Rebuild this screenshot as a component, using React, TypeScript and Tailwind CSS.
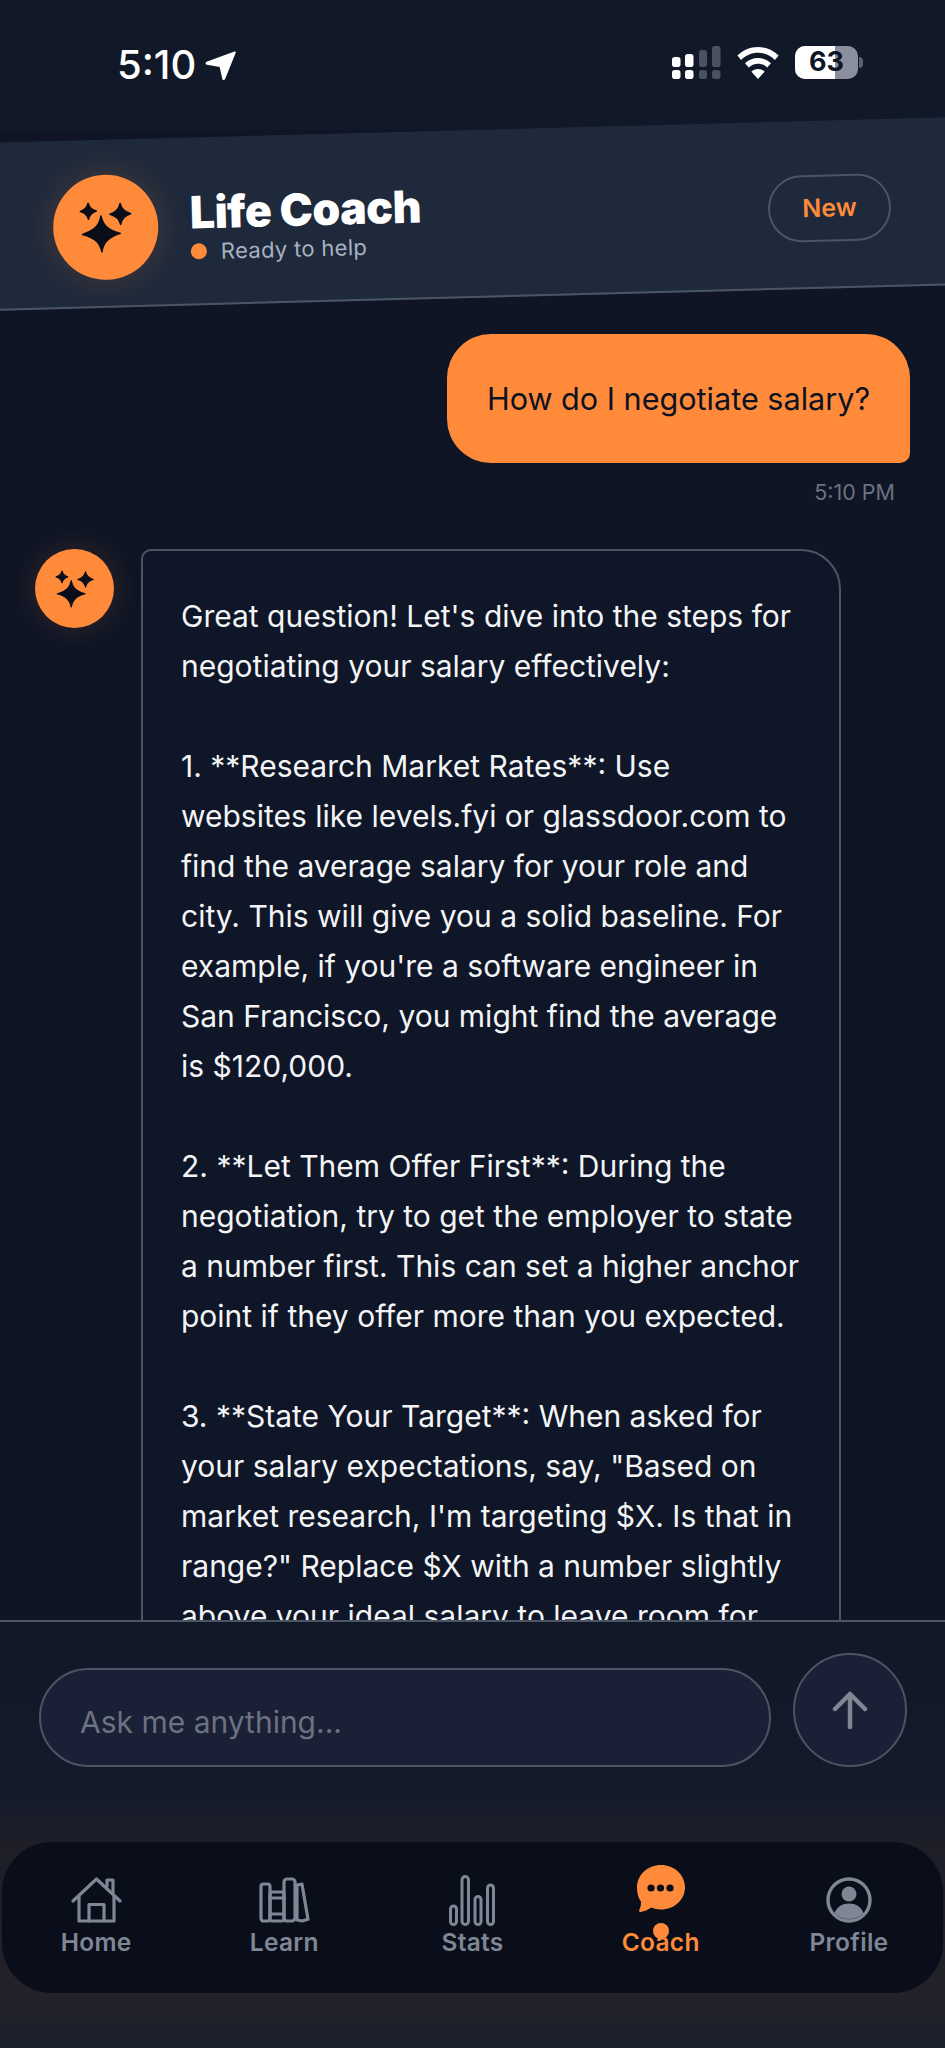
const FONT = "font-['Inter','Noto_Sans',sans-serif]";

function Sparkles({ className }: { className?: string }) {
  return (
    <svg viewBox="0 0 53 51" className={className} fill="currentColor" stroke="currentColor" strokeWidth="1.500" strokeLinejoin="round">
      <path d="M22 14c1.500 8 5 14 19 18-14 4-17.500 10-19 18-1.500-8-5-14-19-18 14-4 17.500-10 19-18z" />
      <path d="M9.500 1c1 4 2.500 6.500 8 8-5.500 1.500-7 4-8 8-1-4-2.500-6.500-8-8 5.500-1.500 7-4 8-8z" />
      <path d="M41.500 2c1 5 3.500 8.500 10.500 10.500-7 2-9.500 5.500-10.500 10.500-1-5-3.500-8.500-10.500-10.500C38 10.500 40.500 7 41.500 2z" />
    </svg>
  );
}

function HomeIcon() {
  return (
    <svg viewBox="0 0 51 46" className="w-[51px] h-[46px]" fill="none" stroke="currentColor" strokeWidth="3.200" strokeLinecap="round" strokeLinejoin="round">
      <path d="M2 24 25.500 2 49 24" />
      <path d="M8 19v25h35V19" />
      <path d="M18 44V27.500h15V44" />
      <path d="M36 9V3h6v13" />
    </svg>
  );
}

function BooksIcon() {
  return (
    <svg viewBox="0 0 51 46" className="w-[51px] h-[46px]" fill="none" stroke="currentColor" strokeWidth="3.200" strokeLinecap="round" strokeLinejoin="round">
      <rect x="2" y="7" width="9" height="37" rx="2.500" />
      <rect x="11" y="15" width="14" height="29" rx="2" />
      <path d="M11 21h14M11 37h14" />
      <rect x="25" y="2" width="11" height="42" rx="3" />
      <path d="m38 8 5-.8 6 35-6 1.800-5-1z" />
    </svg>
  );
}

function StatsIcon() {
  return (
    <svg viewBox="0 0 46 51" className="w-[46px] h-[51px]" fill="none" stroke="currentColor" strokeWidth="3">
      <rect x="1.500" y="31" width="6" height="18.500" rx="3" />
      <rect x="13" y="1.500" width="6.500" height="48" rx="3.200" />
      <rect x="26" y="21.500" width="6" height="28" rx="3" />
      <rect x="38.500" y="10" width="6" height="39.500" rx="3" />
    </svg>
  );
}

function CoachIcon() {
  return (
    <svg viewBox="0 0 49 47" className="w-[49px] h-[47px]">
      <path fill="#ff8a3a" d="M25 0c13.300 0 24 9.900 24 22.300S38.300 44.600 25 44.600c-3.500 0-6.900-.7-9.900-2-2.800 2.300-6.800 4-10.300 4.400-1.300.1-2-1-1.500-2 1.200-2.500 1.800-5.300 1.700-8.300C1.800 32.500 1 27.500 1 22.300 1 9.900 11.700 0 25 0z" />
      <circle cx="15" cy="23" r="3.600" fill="#0a0e1a" />
      <circle cx="24.500" cy="23" r="3.600" fill="#0a0e1a" />
      <circle cx="34" cy="23" r="3.600" fill="#0a0e1a" />
    </svg>
  );
}

function ProfileIcon() {
  return (
    <svg viewBox="0 0 46 46" className="w-[46px] h-[46px]">
      <circle cx="23" cy="23" r="21" fill="none" stroke="currentColor" strokeWidth="3.400" />
      <circle cx="23" cy="17" r="7.500" fill="currentColor" />
      <path d="M8.500 36c2.500-6.500 8-9.500 14.500-9.500s12 3 14.500 9.500c-3.800 4-8.800 6-14.500 6s-10.700-2-14.500-6z" fill="currentColor" />
    </svg>
  );
}

function StatusIcons() {
  return (
    <div className="flex items-center gap-[16px]">
      <svg viewBox="0 0 49 33" className="w-[49px] h-[33px]">
        <rect x="0" y="11" width="8.500" height="10" rx="2.800" fill="#fff" />
        <rect x="0" y="24" width="8.500" height="9" rx="2.800" fill="#fff" />
        <rect x="13" y="8" width="8.500" height="13" rx="2.800" fill="#fff" />
        <rect x="13" y="24" width="8.500" height="9" rx="2.800" fill="#fff" />
        <rect x="27" y="4" width="8" height="17" rx="2.800" fill="#4b5160" />
        <rect x="27" y="24" width="8" height="9" rx="2.800" fill="#4b5160" />
        <rect x="40" y="0" width="8.500" height="21" rx="2.800" fill="#4b5160" />
        <rect x="40" y="24" width="8.500" height="9" rx="2.800" fill="#4b5160" />
      </svg>
      <svg viewBox="0 0 42 32" className="w-[42px] h-[32px]" fill="#fff">
        <path d="M21 0c8 0 15.200 3.300 20.600 8.600l-3.700 4.300C33.500 8.400 27.500 5.700 21 5.700S8.500 8.400 4.100 12.900L.4 8.600C5.800 3.300 13 0 21 0z" />
        <path d="M21 11c5 0 9.600 2 13 5.300l-3.800 4.300c-2.400-2.400-5.600-3.900-9.200-3.900s-6.800 1.500-9.200 3.900L8 16.300C11.400 13 16 11 21 11z" />
        <path d="M21 22c2.600 0 4.900 1 6.600 2.700L21 32l-6.600-7.300C16.100 23 18.400 22 21 22z" />
      </svg>
      <div className="flex items-center gap-[1px]">
        <div className="relative w-[63px] h-[33px] rounded-[10px] overflow-hidden bg-[#8b8e9b]">
          <div className="h-full w-[40px] bg-white" />
          <span className="absolute inset-0 flex items-center justify-center text-[27px] font-bold text-[#0f1525]">63</span>
        </div>
        <div className="w-[4px] h-[11px] rounded-r-full bg-[#5d6270]" />
      </div>
    </div>
  );
}

const paragraphs = [
  "Great question! Let's dive into the steps for negotiating your salary effectively:",
  "1. **Research Market Rates**: Use websites like levels.fyi or glassdoor.com to find the average salary for your role and city. This will give you a solid baseline. For example, if you're a software engineer in San Francisco, you might find the average is $120,000.",
  "2. **Let Them Offer First**: During the negotiation, try to get the employer to state a number first. This can set a higher anchor point if they offer more than you expected.",
  '3. **State Your Target**: When asked for your salary expectations, say, "Based on market research, I\'m targeting $X. Is that in range?" Replace $X with a number slightly above your ideal salary to leave room for',
];

const navItems = [
  { label: "Home", icon: <HomeIcon />, slot: "pb-[4px]" },
  { label: "Learn", icon: <BooksIcon />, slot: "pb-[4px]" },
  { label: "Stats", icon: <StatsIcon />, slot: "pb-[1px]" },
  { label: "Coach", icon: <CoachIcon />, slot: "pb-[15px]", active: true },
  { label: "Profile", icon: <ProfileIcon />, slot: "pb-[4px]" },
];

export default function App() {
  return (
    <div className={`${FONT} w-[945px] h-[2048px] overflow-hidden flex flex-col bg-[#0f1525] text-white`}>
      {/* status bar */}
      <div className="h-[130px] shrink-0 bg-[#111827] flex items-start justify-between pt-[46px] pl-[117px] pr-[82px]">
        <div className="flex items-center gap-[9px]">
          <span className="text-[40px] leading-[38px] font-medium">5:10</span>
          <svg viewBox="0 0 30 30" className="w-[31px] h-[31px]" fill="#fff">
            <path d="M28.500 1.500c.8-.4 1.500.3 1.200 1.100L19.500 28c-.6 1.400-2.500 1.300-2.800-.2l-2.500-11.300L1.800 14.200c-1.500-.3-1.700-2.200-.3-2.900z" />
          </svg>
        </div>
        <StatusIcons />
      </div>

      {/* header */}
      <div className="relative z-10 shrink-0 h-[168px] -mx-[20px] -rotate-[1.53deg] flex items-center justify-between pt-[9px] pl-[73px] pr-[74px] bg-[#1e293b] border-b-2 border-[#4b5563]">
        <div className="flex items-center gap-[32px]">
          <div className="w-[105px] h-[105px] rounded-full bg-[#ff8a3a] shadow-[0_0_36px_rgba(255,138,58,0.18)] text-[#0a0e1a] flex items-center justify-center">
            <Sparkles className="w-[53px] h-[51px]" />
          </div>
          <div className="flex flex-col mt-[6px]">
            <span className="text-[44.500px] leading-[42px] font-black tracking-[-0.5px]">Life Coach</span>
            <div className="flex items-center gap-[14px] mt-[4px]">
              <span className="w-[16px] h-[16px] rounded-full bg-[#ff8a3a]" />
              <span className="text-[22px] leading-[28px] tracking-[0.3px] text-[#a8b2c1]">Ready to help</span>
            </div>
          </div>
        </div>
        <div className="w-[123px] h-[67px] rounded-full border-2 border-[#4b5563] flex items-center justify-center text-[25px] font-semibold text-[#ff8a3a]">
          New
        </div>
      </div>

      {/* messages */}
      <div className="flex-1 min-h-0 overflow-hidden pt-[36px] px-[35px]">
        <div className="flex flex-col items-end">
          <div className="w-[463px] h-[129px] rounded-[44px] rounded-br-[10px] bg-[#ff8a3a] text-[#0d1220] text-[30.600px] flex items-center justify-center">
            How do I negotiate salary?
          </div>
          <span className="mt-[17px] mr-[15px] text-[21.500px] leading-[24px] text-[#6b7280]">5:10 PM</span>
        </div>
        <div className="flex gap-[27px] mt-[45px] items-start">
          <div className="w-[79px] h-[79px] shrink-0 rounded-full bg-[#ff8a3a] shadow-[0_0_30px_rgba(255,138,58,0.15)] text-[#0a0e1a] flex items-center justify-center">
            <Sparkles className="w-[39px] h-[38px]" />
          </div>
          <div className="w-[700px] shrink-0 rounded-[40px] rounded-tl-[10px] border-2 border-[#4b5563] bg-[#0f1627] pt-[40px] pb-[100px] pl-[38px] pr-[39px] text-[30px] leading-[50px] text-[#f3f4f6] flex flex-col gap-[50px]">
            {paragraphs.map((p) => (
              <p key={p}>{p}</p>
            ))}
          </div>
        </div>
      </div>

      {/* input */}
      <div className="relative z-10 shrink-0 h-[172px] border-t-2 border-[#4b5563] bg-gradient-to-b from-[#111827] to-[#141a2a] flex items-start gap-[22px] pl-[39px] pt-[31px]">
        <div className="w-[732px] h-[99px] mt-[15px] rounded-full border-2 border-[#4b5563] bg-[#1a2035] flex items-center pl-[39px] pt-[9px] text-[30px] text-[#6b7280]">
          Ask me anything...
        </div>
        <div className="w-[114px] h-[114px] rounded-full border-2 border-[#4b5563] bg-[#1a2035] flex items-center justify-center text-[#7f8694]">
          <svg viewBox="0 0 36 38" className="w-[36px] h-[38px]" fill="none" stroke="currentColor" strokeWidth="4.500" strokeLinecap="round" strokeLinejoin="round">
            <path d="M18 36V3M3 18 18 3l15 15" />
          </svg>
        </div>
      </div>

      {/* nav */}
      <div className="shrink-0 h-[256px] bg-[linear-gradient(180deg,#141a2a_0%,#1e1e29_20%,#23222a_82%,#1a1f2c_100%)] px-[2px] pt-[50px]">
        <div className="h-[151px] rounded-[50px] bg-[#0a0e1a] grid grid-cols-5 pt-[23px]">
          {navItems.map((item) => (
            <div key={item.label} className={`relative flex flex-col items-center ${item.active ? "text-[#ff8a3a]" : "text-[#7f8694]"}`}>
              <div className={`h-[62px] flex items-end ${item.slot}`}>{item.icon}</div>
              <span className="text-[24.500px] leading-[30px] font-semibold tracking-[0.3px]">{item.label}</span>
              {item.active && <span className="absolute left-1/2 -translate-x-1/2 top-[58px] w-[16px] h-[16px] rounded-full bg-[#ff8a3a]" />}
            </div>
          ))}
        </div>
      </div>
    </div>
  );
}
